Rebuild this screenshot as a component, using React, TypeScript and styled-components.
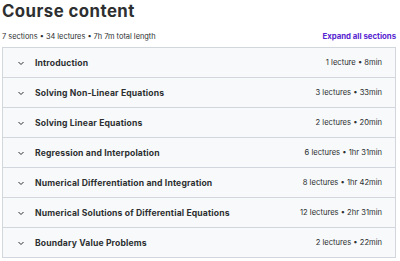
import React from "react";
import styled, { createGlobalStyle } from "styled-components";

const Global = createGlobalStyle`
  html, body { margin: 0; padding: 0; background: #ffffff; }
  body { font-family: "Inter", "Noto Sans", sans-serif; color: #2d2f31; }
`;

const Page = styled.div`
  width: 400px;
  padding: 0 4px 0 2px;
  box-sizing: border-box;
`;

const Title = styled.h2`
  margin: 0;
  padding-top: 1px;
  font-size: 16.8px;
  line-height: 20px;
  font-weight: 700;
  letter-spacing: 0.45px;
`;

const SummaryRow = styled.div`
  display: flex;
  justify-content: space-between;
  align-items: center;
  margin-top: 9px;
  height: 12px;
  margin-bottom: 5px;
`;

const Summary = styled.span`
  font-size: 7.4px;
  color: #2d2f31;
`;

const ExpandLink = styled.span`
  font-size: 7.8px;
  font-weight: 700;
  color: #5624d0;
`;

const List = styled.div`
  border: 1px solid #d1d7dc;
  border-bottom: none;
`;

const Row = styled.div`
  display: flex;
  align-items: center;
  height: 29px;
  padding: 0 13px 0 14px;
  background: #f7f9fa;
  border-bottom: 1px solid #d1d7dc;
`;

const Chevron = styled.svg`
  width: 8px;
  height: 8px;
  flex: none;
  margin-right: 10px;
`;

const SectionTitle = styled.span`
  flex: 1;
  font-size: 8.6px;
  font-weight: 700;
  letter-spacing: 0.15px;
  color: #2d2f31;
`;

const Meta = styled.span`
  font-size: 7.6px;
  color: #2d2f31;
`;

const sections = [
  ["Introduction", "1 lecture • 8min"],
  ["Solving Non-Linear Equations", "3 lectures • 33min"],
  ["Solving Linear Equations", "2 lectures • 20min"],
  ["Regression and Interpolation", "6 lectures • 1hr 31min"],
  ["Numerical Differentiation and Integration", "8 lectures • 1hr 42min"],
  ["Numerical Solutions of Differential Equations", "12 lectures • 2hr 31min"],
  ["Boundary Value Problems", "2 lectures • 22min"],
];

export default function App() {
  return (
    <Page>
      <Global />
      <Title>Course content</Title>
      <SummaryRow>
        <Summary>7 sections • 34 lectures • 7h 7m total length</Summary>
        <ExpandLink>Expand all sections</ExpandLink>
      </SummaryRow>
      <List>
        {sections.map(([t, m]) => (
          <Row key={t}>
            <Chevron viewBox="0 0 8 8">
              <path d="M1.5 3 L4 5.5 L6.5 3" fill="none" stroke="#2d2f31" strokeWidth="1" />
            </Chevron>
            <SectionTitle>{t}</SectionTitle>
            <Meta>{m}</Meta>
          </Row>
        ))}
      </List>
    </Page>
  );
}
